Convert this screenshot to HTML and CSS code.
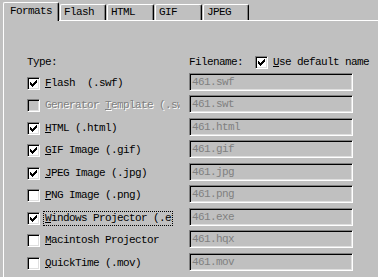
FILE: index.html
```html
<!DOCTYPE html>
<html lang="en">
<head>
    <meta charset="UTF-8">
    <title>Publish Settings</title>
    <link rel="stylesheet" href="styles.css">
</head>
<body>

<div class="window">
    <div class="tabs">
        <div class="tab selected">Formats</div>
        <div class="tab first">Flash</div>
        <div class="tab">HTML</div>
        <div class="tab">GIF</div>
        <div class="tab last">JPEG</div>
    </div>

    <div class="panel">
        <div class="head">
            <div class="col-type">Type:</div>
            <div class="col-file">
                <span>Filename:</span>
                <span class="cb checked"><svg width="7" height="7" viewBox="0 0 7 7"><path d="M0 2h1v3h-1zM1 3h1v3h-1zM2 4h1v3h-1zM3 3h1v3h-1zM4 2h1v3h-1zM5 1h1v3h-1zM6 0h1v3h-1z"/></svg></span>
                <span class="head-label"><u>U</u>se default name</span>
            </div>
        </div>

        <div class="rows">
            <div class="row">
                <div class="check"><span class="cb checked"><svg width="7" height="7" viewBox="0 0 7 7"><path d="M0 2h1v3h-1zM1 3h1v3h-1zM2 4h1v3h-1zM3 3h1v3h-1zM4 2h1v3h-1zM5 1h1v3h-1zM6 0h1v3h-1z"/></svg></span><span class="label"><u>F</u>lash  (.swf)</span></div>
                <div class="field">461.swf</div>
            </div>
            <div class="row disabled">
                <div class="check"><span class="cb"></span><span class="label">Generator <u>T</u>emplate (.swt)</span></div>
                <div class="field">461.swt</div>
            </div>
            <div class="row">
                <div class="check"><span class="cb checked"><svg width="7" height="7" viewBox="0 0 7 7"><path d="M0 2h1v3h-1zM1 3h1v3h-1zM2 4h1v3h-1zM3 3h1v3h-1zM4 2h1v3h-1zM5 1h1v3h-1zM6 0h1v3h-1z"/></svg></span><span class="label"><u>H</u>TML (.html)</span></div>
                <div class="field">461.html</div>
            </div>
            <div class="row">
                <div class="check"><span class="cb checked"><svg width="7" height="7" viewBox="0 0 7 7"><path d="M0 2h1v3h-1zM1 3h1v3h-1zM2 4h1v3h-1zM3 3h1v3h-1zM4 2h1v3h-1zM5 1h1v3h-1zM6 0h1v3h-1z"/></svg></span><span class="label"><u>G</u>IF Image (.gif)</span></div>
                <div class="field">461.gif</div>
            </div>
            <div class="row">
                <div class="check"><span class="cb checked"><svg width="7" height="7" viewBox="0 0 7 7"><path d="M0 2h1v3h-1zM1 3h1v3h-1zM2 4h1v3h-1zM3 3h1v3h-1zM4 2h1v3h-1zM5 1h1v3h-1zM6 0h1v3h-1z"/></svg></span><span class="label"><u>J</u>PEG Image (.jpg)</span></div>
                <div class="field">461.jpg</div>
            </div>
            <div class="row">
                <div class="check"><span class="cb"></span><span class="label"><u>P</u>NG Image (.png)</span></div>
                <div class="field">461.png</div>
            </div>
            <div class="row">
                <div class="check"><span class="cb checked"><svg width="7" height="7" viewBox="0 0 7 7"><path d="M0 2h1v3h-1zM1 3h1v3h-1zM2 4h1v3h-1zM3 3h1v3h-1zM4 2h1v3h-1zM5 1h1v3h-1zM6 0h1v3h-1z"/></svg></span><span class="label focus"><u>W</u>indows Projector (.exe)</span></div>
                <div class="field">461.exe</div>
            </div>
            <div class="row">
                <div class="check"><span class="cb"></span><span class="label"><u>M</u>acintosh Projector</span></div>
                <div class="field">461.hqx</div>
            </div>
            <div class="row">
                <div class="check"><span class="cb"></span><span class="label"><u>Q</u>uickTime (.mov)</span></div>
                <div class="field">461.mov</div>
            </div>
        </div>
    </div>
</div>

</body>
</html>
```

FILE: styles.css
```css
body {
    margin: 0;
    width: 378px;
    height: 277px;
    overflow: hidden;
    background-color: #c0c0c0;
    color: #000;
    font-family: "Liberation Mono", "Courier New", monospace;
    font-size: 11px;
    letter-spacing: -0.6px;
}

u {
    text-decoration: underline;
    text-underline-offset: 1px;
}

.window {
    padding: 2px 0 0 3px;
}

/* Tab strip */
.tabs {
    display: flex;
    align-items: flex-end;
    height: 18px;
}

.tab {
    box-sizing: border-box;
    width: 47px;
    height: 16px;
    margin-left: 1px;
    padding: 1px 0 0 3px;
    line-height: 13px;
    border-top: 1px solid #fff;
    border-left: 1px solid #fff;
    border-right: 1px solid #000;
    border-radius: 2px 2px 0 0;
    box-shadow: inset -1px 0 #808080;
}

.tab.first, .tab.last {
    width: 46px;
}

.tab.selected {
    position: relative;
    z-index: 1;
    width: 56px;
    height: 19px;
    margin: 0 0 -1px 0;
    padding: 2px 0 0 6px;
    background-color: #c0c0c0;
}

/* Panel */
.panel {
    box-sizing: border-box;
    width: 375px;
    height: 257px;
    padding: 34px 0 0 23px;
    border-top: 1px solid #fff;
    border-left: 1px solid #fff;
}

.head {
    display: flex;
    align-items: center;
    height: 14px;
    margin-bottom: 4px;
    line-height: 13px;
    white-space: pre;
}

.col-type {
    width: 162px;
}

.col-file {
    display: flex;
    align-items: center;
}

.col-file .cb {
    margin-left: 12px;
}

.head-label {
    margin-left: 5px;
}

/* Format rows */
.row {
    display: flex;
    height: 22px;
}

.row:nth-child(even) {
    height: 23px;
}

.check {
    display: flex;
    align-items: center;
    width: 162px;
    height: 13px;
    margin-top: 4px;
    line-height: 13px;
}

.label {
    display: block;
    max-width: 135px;
    margin-left: 5px;
    overflow: hidden;
    white-space: pre;
}

.label.focus {
    box-sizing: border-box;
    width: 128px;
    margin-left: 4px;
    padding-left: 1px;
    outline: 1px dotted #000;
    outline-offset: 0;
}

.disabled .label {
    color: #808080;
    text-shadow: 1px 1px 0 #fff;
}

/* Win95 style checkbox */
.cb {
    box-sizing: border-box;
    display: flex;
    align-items: flex-start;
    flex: none;
    width: 13px;
    height: 13px;
    background-color: #fff;
    border-top: 1px solid #808080;
    border-left: 1px solid #808080;
    border-right: 1px solid #fff;
    border-bottom: 1px solid #fff;
    box-shadow: inset 1px 1px #000, inset -1px -1px #dfdfdf;
}

.cb svg {
    display: block;
    margin: 2px 0 0 2px;
}

.disabled .cb {
    background-color: #c0c0c0;
}

/* Disabled text fields */
.field {
    box-sizing: border-box;
    width: 164px;
    height: 18px;
    padding: 2px 0 0 2px;
    line-height: 13px;
    color: #808080;
    white-space: pre;
    border-top: 1px solid #808080;
    border-left: 1px solid #808080;
    border-right: 1px solid #fff;
    border-bottom: 1px solid #fff;
    box-shadow: inset 1px 1px #000, inset -1px -1px #dfdfdf;
}
```
